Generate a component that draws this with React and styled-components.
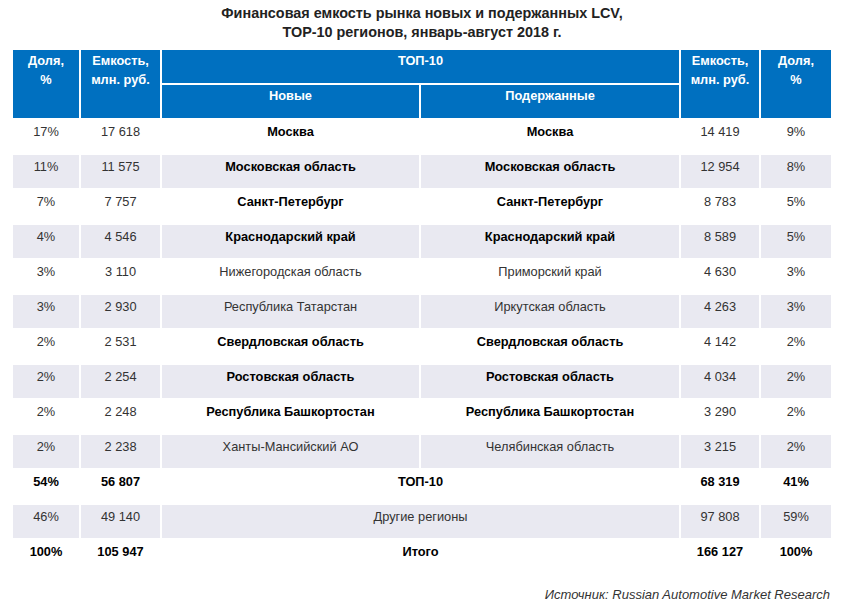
import React from "react";
import styled, { createGlobalStyle } from "styled-components";

const GlobalStyle = createGlobalStyle`
  body {
    margin: 0;
    background: #fff;
    font-family: "Liberation Sans", Arial, sans-serif;
  }
`;

const Page = styled.div`
  width: 850px;
  height: 616px;
  padding: 4px 0 0 11px;
  box-sizing: border-box;
`;

const Title = styled.h1`
  margin: 0 0 6px;
  width: 822px;
  text-align: center;
  font-size: 14.4px;
  line-height: 19px;
  font-weight: bold;
  color: #222;
`;

const Table = styled.table`
  table-layout: fixed;
  width: 822px;
  border-collapse: separate;
  border-spacing: 2px;
  font-size: 12.8px;
`;

const HeadCell = styled.th`
  background: #0070c0;
  color: #fff;
  font-weight: bold;
  height: 32px;
  padding: 1px 2px 0;
  vertical-align: top;
  text-align: center;
  line-height: 19px;
`;

const Row = styled.tr`
  background: ${(p) => (p.$shaded ? "#e9e9f1" : "#fff")};
`;

const Cell = styled.td`
  height: 31px;
  padding: 2px 2px 0;
  vertical-align: top;
  text-align: center;
  line-height: 19px;
  color: ${(p) => (p.$bold ? "#000" : "#333")};
  font-weight: ${(p) => (p.$bold ? "bold" : "normal")};
`;

const Source = styled.div`
  width: 819px;
  margin-top: 12px;
  text-align: right;
  font-style: italic;
  font-size: 13px;
  line-height: 16px;
  color: #333;
`;

const rows = [
  ["17%", "17 618", "Москва", "Москва", "14 419", "9%", true],
  ["11%", "11 575", "Московская область", "Московская область", "12 954", "8%", true],
  ["7%", "7 757", "Санкт-Петербург", "Санкт-Петербург", "8 783", "5%", true],
  ["4%", "4 546", "Краснодарский край", "Краснодарский край", "8 589", "5%", true],
  ["3%", "3 110", "Нижегородская область", "Приморский край", "4 630", "3%", false],
  ["3%", "2 930", "Республика Татарстан", "Иркутская область", "4 263", "3%", false],
  ["2%", "2 531", "Свердловская область", "Свердловская область", "4 142", "2%", true],
  ["2%", "2 254", "Ростовская область", "Ростовская область", "4 034", "2%", true],
  ["2%", "2 248", "Республика Башкортостан", "Республика Башкортостан", "3 290", "2%", true],
  ["2%", "2 238", "Ханты-Мансийский АО", "Челябинская область", "3 215", "2%", false],
];

const totals = [
  ["54%", "56 807", "ТОП-10", "68 319", "41%", true],
  ["46%", "49 140", "Другие регионы", "97 808", "59%", false],
  ["100%", "105 947", "Итого", "166 127", "100%", true],
];

export default function App() {
  return (
    <Page>
      <GlobalStyle />
      <Title>
        Финансовая емкость рынка новых и подержанных LCV,
        <br />
        TOP-10 регионов, январь-август 2018 г.
      </Title>
      <Table>
        <colgroup>
          <col style={{ width: 66 }} />
          <col style={{ width: 79 }} />
          <col style={{ width: 257 }} />
          <col style={{ width: 258 }} />
          <col style={{ width: 78 }} />
          <col style={{ width: 70 }} />
        </colgroup>
        <thead>
          <tr>
            <HeadCell rowSpan={2}>Доля,<br />%</HeadCell>
            <HeadCell rowSpan={2}>Емкость,<br />млн. руб.</HeadCell>
            <HeadCell colSpan={2}>ТОП-10</HeadCell>
            <HeadCell rowSpan={2}>Емкость,<br />млн. руб.</HeadCell>
            <HeadCell rowSpan={2}>Доля,<br />%</HeadCell>
          </tr>
          <tr>
            <HeadCell>Новые</HeadCell>
            <HeadCell>Подержанные</HeadCell>
          </tr>
        </thead>
        <tbody>
          {rows.map(([s1, v1, n1, n2, v2, s2, strong], i) => (
            <Row key={i} $shaded={i % 2 === 1}>
              <Cell>{s1}</Cell>
              <Cell>{v1}</Cell>
              <Cell $bold={strong}>{n1}</Cell>
              <Cell $bold={strong}>{n2}</Cell>
              <Cell>{v2}</Cell>
              <Cell>{s2}</Cell>
            </Row>
          ))}
          {totals.map(([s1, v1, name, v2, s2, strong], i) => (
            <Row key={"t" + i} $shaded={i === 1}>
              <Cell $bold={strong}>{s1}</Cell>
              <Cell $bold={strong}>{v1}</Cell>
              <Cell colSpan={2} $bold={strong}>{name}</Cell>
              <Cell $bold={strong}>{v2}</Cell>
              <Cell $bold={strong}>{s2}</Cell>
            </Row>
          ))}
        </tbody>
      </Table>
      <Source>Источник: Russian Automotive Market Research</Source>
    </Page>
  );
}
